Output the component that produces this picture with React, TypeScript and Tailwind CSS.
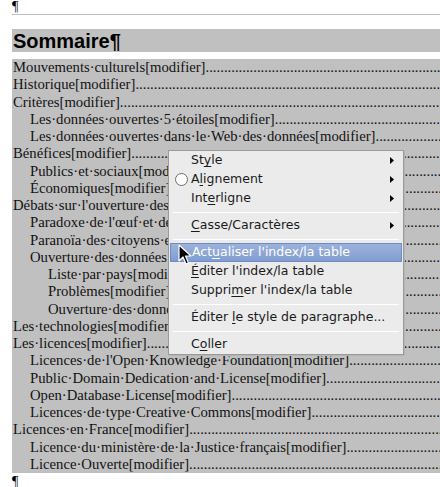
import React from 'react';

type Row = { level: number; text: string };

const rows: Row[] = [
  { level: 0, text: 'Mouvements·culturels[modifier]' },
  { level: 0, text: 'Historique[modifier]' },
  { level: 0, text: 'Critères[modifier]' },
  { level: 1, text: 'Les·données·ouvertes·5·étoiles[modifier]' },
  { level: 1, text: 'Les·données·ouvertes·dans·le·Web·des·données[modifier]' },
  { level: 0, text: 'Bénéfices[modifier]' },
  { level: 1, text: 'Publics·et·sociaux[modifier]' },
  { level: 1, text: 'Économiques[modifier]' },
  { level: 0, text: "Débats·sur·l'ouverture·des·données[modifier]" },
  { level: 1, text: "Paradoxe·de·l'œuf·et·de·la·poule[modifier]" },
  { level: 1, text: 'Paranoïa·des·citoyens·et·des·états[modifier]' },
  { level: 1, text: 'Ouverture·des·données·publiques[modifier]' },
  { level: 2, text: 'Liste·par·pays[modifier]' },
  { level: 2, text: 'Problèmes[modifier]' },
  { level: 2, text: 'Ouverture·des·données·scientifiques[modifier]' },
  { level: 0, text: 'Les·technologies[modifier]' },
  { level: 0, text: 'Les·licences[modifier]' },
  { level: 1, text: "Licences·de·l'Open·Knowledge·Foundation[modifier]" },
  { level: 1, text: 'Public·Domain·Dedication·and·License[modifier]' },
  { level: 1, text: 'Open·Database·License[modifier]' },
  { level: 1, text: 'Licences·de·type·Creative·Commons[modifier]' },
  { level: 0, text: 'Licences·en·France[modifier]' },
  { level: 1, text: 'Licence·du·ministère·de·la·Justice·français[modifier]' },
  { level: 1, text: 'Licence·Ouverte[modifier]' },
];

const indent = ['pl-0', 'pl-[18px]', 'pl-[36px]'];
const leader = '.'.repeat(160);

const Arrow = () => (
  <svg width="5" height="7" viewBox="0 0 5 7" className="ml-auto">
    <path d="M0 0 L4 3.5 L0 7 Z" fill="#000" />
  </svg>
);

const Item = ({ children, sub, active, radio }: { children: React.ReactNode; sub?: boolean; active?: boolean; radio?: boolean }) => (
  <div
    className={`relative flex items-center h-[19px] pr-[8px] ${
      active
        ? 'mx-[1px] pl-[21px] bg-gradient-to-b from-[#9cb2dc] to-[#819dd0] border border-[#6f8cc2] text-white'
        : 'pl-[22px] text-[#1a1a1a]'
    }`}
  >
    {radio && (
      <span className="absolute left-[6px] top-[3px] w-[13px] h-[13px] rounded-full border border-[#6e6e6e] bg-white" />
    )}
    <span className="whitespace-nowrap">{children}</span>
    {sub && <Arrow />}
  </div>
);

const Sep = () => (
  <div className="h-[8px] flex items-center px-[4px]">
    <div className="w-full h-[1px] bg-[#a9a9a9] border-b border-white" />
  </div>
);

export default function App() {
  return (
    <div className="relative w-[440px] h-[487px] overflow-hidden bg-white text-black">
      <div className="pl-[12px] font-['Liberation_Serif',serif] text-[14px] leading-[14px] h-[14px]">¶</div>
      <div className="ml-[12px] h-[1px] bg-[#c0c0c0]" />
      <div className="h-[14px]" />
      <div className="ml-[12px] h-[23px] bg-[#c0c0c0] flex items-center pl-[1px] font-['Liberation_Sans',sans-serif] font-bold text-[20px]">
        Sommaire¶
      </div>
      <div className="h-[7px]" />
      <div className="ml-[12px] bg-[#c0c0c0] font-['Liberation_Serif',serif] text-[14.7px] text-[#111]">
        {rows.map((r, i) => (
          <div key={i} className={`flex h-[17.25px] leading-[17.25px] ${indent[r.level]} pl-[1px]`}>
            <span className="whitespace-nowrap">{r.text}</span>
            <span className="flex-1 overflow-hidden whitespace-nowrap">{leader}</span>
          </div>
        ))}
      </div>
      <div className="pl-[12px] mt-[2px] font-['Liberation_Serif',serif] text-[14px] leading-[14px]">¶</div>

      <div className="absolute left-[168px] top-[150px] w-[236px] bg-[#ebebeb] border border-[#9a9a9a] shadow-[1px_1px_0_#b5b5b5] font-['DejaVu_Sans',sans-serif] text-[12.5px]">
        <Item sub>St<u className="underline-offset-2">y</u>le</Item>
        <Item sub radio>A<u className="underline-offset-2">l</u>ignement</Item>
        <Item sub>Int<u className="underline-offset-2">e</u>rligne</Item>
        <Sep />
        <Item sub><u className="underline-offset-2">C</u>asse/Caractères</Item>
        <Sep />
        <Item active>Act<u className="underline-offset-2">u</u>aliser l'index/la table</Item>
        <Item><u className="underline-offset-2">É</u>diter l'index/la table</Item>
        <Item>Suppri<u className="underline-offset-2">m</u>er l'index/la table</Item>
        <Sep />
        <Item>Éditer <u className="underline-offset-2">l</u>e style de paragraphe...</Item>
        <Sep />
        <Item>C<u className="underline-offset-2">o</u>ller</Item>
      </div>

      <svg className="absolute left-[178px] top-[244px]" width="14" height="22" viewBox="0 0 14 22">
        <path d="M1 1 L1 17 L5 13 L8 20 L10.5 19 L7.5 12 L13 12 Z" fill="#000" stroke="#fff" strokeWidth="1.2" strokeLinejoin="round" />
      </svg>
    </div>
  );
}
